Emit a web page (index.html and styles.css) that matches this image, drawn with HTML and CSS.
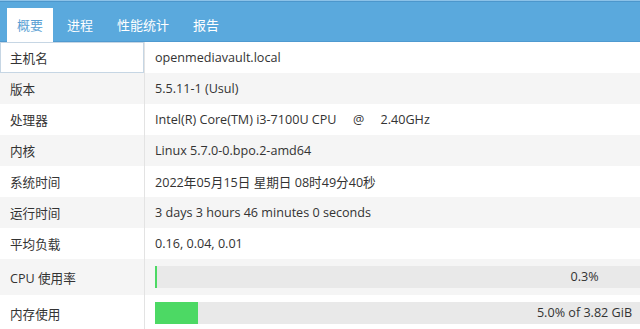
FILE: index.html
```html
<!DOCTYPE html>
<html>
<head>
  <title>系统信息</title>
  <meta name="viewport" content="width=device-width, initial-scale=1.0">
  <link rel="stylesheet" href="styles.css">
</head>
<body>
  <div class="panel">
    <!-- Tab bar -->
    <div class="tabbar">
      <div class="tab active">概要</div>
      <div class="tab">进程</div>
      <div class="tab">性能统计</div>
      <div class="tab">报告</div>
    </div>

    <!-- Overview grid -->
    <div class="grid">
      <div class="row">
        <div class="label focused">主机名</div>
        <div class="value">openmediavault.local</div>
      </div>
      <div class="row alt">
        <div class="label">版本</div>
        <div class="value">5.5.11-1 (Usul)</div>
      </div>
      <div class="row">
        <div class="label">处理器</div>
        <div class="value raw">Intel(R) Core(TM) i3-7100U CPU     @     2.40GHz</div>
      </div>
      <div class="row alt">
        <div class="label">内核</div>
        <div class="value">Linux 5.7.0-0.bpo.2-amd64</div>
      </div>
      <div class="row">
        <div class="label">系统时间</div>
        <div class="value">2022年05月15日 星期日 08时49分40秒</div>
      </div>
      <div class="row alt">
        <div class="label">运行时间</div>
        <div class="value">3 days 3 hours 46 minutes 0 seconds</div>
      </div>
      <div class="row">
        <div class="label">平均负载</div>
        <div class="value">0.16, 0.04, 0.01</div>
      </div>
      <div class="row alt tall">
        <div class="label">CPU 使用率</div>
        <div class="value">
          <div class="progress">
            <div class="progress-fill" style="width: 2px;"></div>
            <span class="progress-text">0.3%</span>
          </div>
        </div>
      </div>
      <div class="row tall">
        <div class="label">内存使用</div>
        <div class="value">
          <div class="progress">
            <div class="progress-fill" style="width: 43px;"></div>
            <span class="progress-text">5.0% of 3.82 GiB</span>
          </div>
        </div>
      </div>
    </div>
  </div>
</body>
</html>
```

FILE: styles.css
```css
body {
  margin: 0;
  font-family: "Open Sans", "Noto Sans CJK SC", sans-serif;
  font-size: 12.6px;
  color: #333;
  background-color: #fff;
  overflow: hidden;
}
.panel {
  width: 1024px;
}
.tabbar {
  display: flex;
  align-items: flex-end;
  gap: 4px;
  height: 42px;
  box-sizing: border-box;
  padding: 0 0 0 7px;
  background-color: #5aa9dd;
  border-top: 1px solid #8cc2e8;
  box-shadow: inset 0 1px 0 #4d97cc, inset 0 -1px 0 #4f9ad0;
}
.tab {
  height: 34px;
  line-height: 34px;
  padding: 0 10px;
  color: #fff;
  font-size: 13px;
}
.tab.active {
  background-color: #fff;
  color: #5a9fd4;
}
.row {
  display: grid;
  grid-template-columns: 145px 1fr;
  height: 31px;
  background-color: #fff;
}
.row.alt {
  background-color: #f5f5f5;
}
.row.tall {
  height: 36px;
}
.label {
  display: flex;
  align-items: center;
  padding-left: 10px;
  border-right: 1px solid #e3e3e3;
}
.label.focused {
  box-shadow: inset 0 0 0 1px #c6d6e4;
}
.value {
  display: flex;
  align-items: center;
  padding: 0 10px;
}
.value.raw {
  white-space: pre;
}
.progress {
  position: relative;
  width: 100%;
  height: 22px;
  background-color: #e9e9e9;
}
.progress-fill {
  height: 100%;
  background-color: #4cd964;
}
.progress-text {
  position: absolute;
  left: 0;
  right: 0;
  top: 0;
  line-height: 22px;
  text-align: center;
}
```
